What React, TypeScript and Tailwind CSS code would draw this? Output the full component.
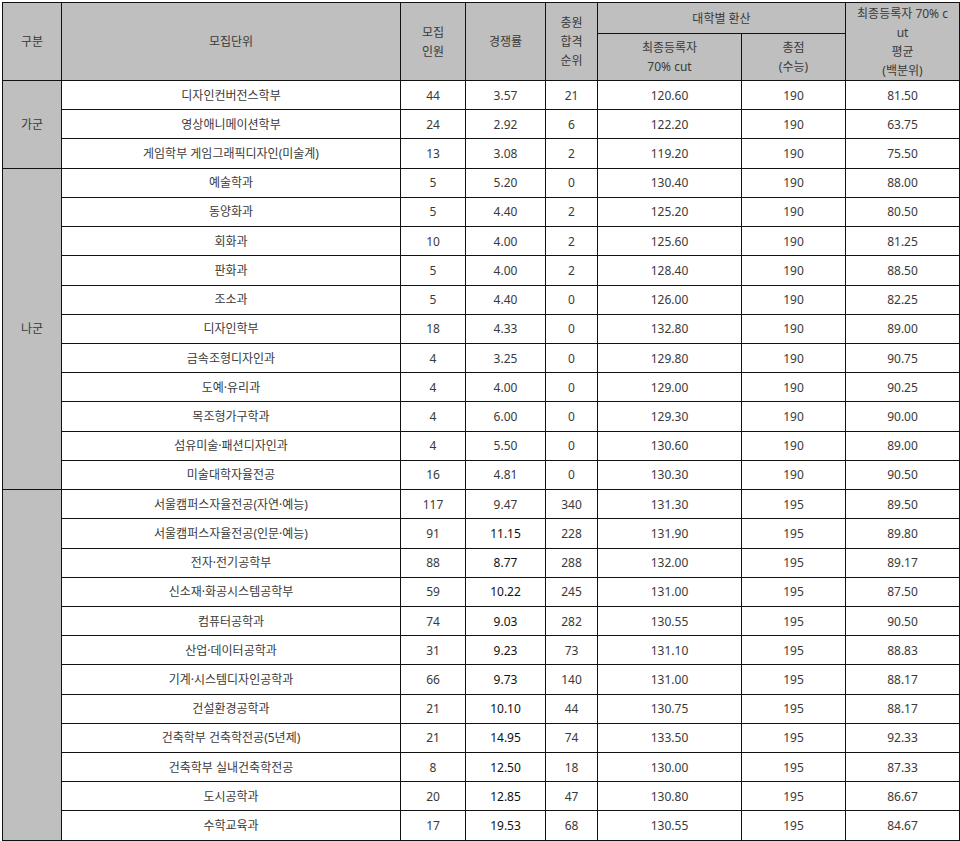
type Row = {
  name: string;
  quota: string;
  rate: string;
  rank: string;
  cut: string;
  total: string;
  avg: string;
  strong?: boolean;
};

const GA: Row[] = [
  { name: "디자인컨버전스학부", quota: "44", rate: "3.57", rank: "21", cut: "120.60", total: "190", avg: "81.50" },
  { name: "영상애니메이션학부", quota: "24", rate: "2.92", rank: "6", cut: "122.20", total: "190", avg: "63.75" },
  { name: "게임학부 게임그래픽디자인(미술계)", quota: "13", rate: "3.08", rank: "2", cut: "119.20", total: "190", avg: "75.50" },
];

const NA: Row[] = [
  { name: "예술학과", quota: "5", rate: "5.20", rank: "0", cut: "130.40", total: "190", avg: "88.00" },
  { name: "동양화과", quota: "5", rate: "4.40", rank: "2", cut: "125.20", total: "190", avg: "80.50" },
  { name: "회화과", quota: "10", rate: "4.00", rank: "2", cut: "125.60", total: "190", avg: "81.25" },
  { name: "판화과", quota: "5", rate: "4.00", rank: "2", cut: "128.40", total: "190", avg: "88.50" },
  { name: "조소과", quota: "5", rate: "4.40", rank: "0", cut: "126.00", total: "190", avg: "82.25" },
  { name: "디자인학부", quota: "18", rate: "4.33", rank: "0", cut: "132.80", total: "190", avg: "89.00" },
  { name: "금속조형디자인과", quota: "4", rate: "3.25", rank: "0", cut: "129.80", total: "190", avg: "90.75" },
  { name: "도예·유리과", quota: "4", rate: "4.00", rank: "0", cut: "129.00", total: "190", avg: "90.25" },
  { name: "목조형가구학과", quota: "4", rate: "6.00", rank: "0", cut: "129.30", total: "190", avg: "90.00" },
  { name: "섬유미술·패션디자인과", quota: "4", rate: "5.50", rank: "0", cut: "130.60", total: "190", avg: "89.00" },
  { name: "미술대학자율전공", quota: "16", rate: "4.81", rank: "0", cut: "130.30", total: "190", avg: "90.50" },
];

const DA: Row[] = [
  { name: "서울캠퍼스자율전공(자연·예능)", quota: "117", rate: "9.47", rank: "340", cut: "131.30", total: "195", avg: "89.50" },
  { name: "서울캠퍼스자율전공(인문·예능)", quota: "91", rate: "11.15", rank: "228", cut: "131.90", total: "195", avg: "89.80", strong: true },
  { name: "전자·전기공학부", quota: "88", rate: "8.77", rank: "288", cut: "132.00", total: "195", avg: "89.17", strong: true },
  { name: "신소재·화공시스템공학부", quota: "59", rate: "10.22", rank: "245", cut: "131.00", total: "195", avg: "87.50", strong: true },
  { name: "컴퓨터공학과", quota: "74", rate: "9.03", rank: "282", cut: "130.55", total: "195", avg: "90.50", strong: true },
  { name: "산업·데이터공학과", quota: "31", rate: "9.23", rank: "73", cut: "131.10", total: "195", avg: "88.83", strong: true },
  { name: "기계·시스템디자인공학과", quota: "66", rate: "9.73", rank: "140", cut: "131.00", total: "195", avg: "88.17", strong: true },
  { name: "건설환경공학과", quota: "21", rate: "10.10", rank: "44", cut: "130.75", total: "195", avg: "88.17", strong: true },
  { name: "건축학부 건축학전공(5년제)", quota: "21", rate: "14.95", rank: "74", cut: "133.50", total: "195", avg: "92.33", strong: true },
  { name: "건축학부 실내건축학전공", quota: "8", rate: "12.50", rank: "18", cut: "130.00", total: "195", avg: "87.33", strong: true },
  { name: "도시공학과", quota: "20", rate: "12.85", rank: "47", cut: "130.80", total: "195", avg: "86.67", strong: true },
  { name: "수학교육과", quota: "17", rate: "19.53", rank: "68", cut: "130.55", total: "195", avg: "84.67", strong: true },
];

const GROUPS: { label: string; rows: Row[] }[] = [
  { label: "가군", rows: GA },
  { label: "나군", rows: NA },
  { label: "", rows: DA },
];

const th = "border border-[#111] bg-[#bfbfbf] px-1 text-center align-middle font-normal";
const td = "border border-[#111] px-1 text-center align-middle";

export default function App() {
  return (
    <div
      className="bg-white p-[2px] text-[12px] leading-[19px] text-[#3a3a3a]"
      style={{ fontFamily: '"Noto Sans", "Noto Sans CJK KR", sans-serif' }}
    >
      <table className="w-[957px] table-fixed border-collapse">
        <colgroup>
          <col className="w-[59px]" />
          <col className="w-[339px]" />
          <col className="w-[65px]" />
          <col className="w-[80px]" />
          <col className="w-[52px]" />
          <col className="w-[144px]" />
          <col className="w-[104px]" />
          <col className="w-[114px]" />
        </colgroup>
        <thead>
          <tr className="h-[31px]">
            <th rowSpan={2} className={th}>구분</th>
            <th rowSpan={2} className={th}>모집단위</th>
            <th rowSpan={2} className={th}>
              모집
              <br />
              인원
            </th>
            <th rowSpan={2} className={th}>경쟁률</th>
            <th rowSpan={2} className={th}>
              충원
              <br />
              합격
              <br />
              순위
            </th>
            <th colSpan={2} className={th}>대학별 환산</th>
            <th rowSpan={2} className={`${th} break-all px-[9px]`}>
              최종등록자 70% cut
              <br />
              평균
              <br />
              (백분위)
            </th>
          </tr>
          <tr className="h-[47px]">
            <th className={th}>
              최종등록자
              <br />
              70% cut
            </th>
            <th className={th}>
              총점
              <br />
              (수능)
            </th>
          </tr>
        </thead>
        <tbody>
          {GROUPS.map((g) =>
            g.rows.map((r, i) => (
              <tr key={`${g.label}-${r.name}`} className="h-[29.23px]">
                {i === 0 ? (
                  <td rowSpan={g.rows.length} className={`${td} bg-[#bfbfbf]`}>
                    {g.label}
                  </td>
                ) : null}
                <td className={td}>{r.name}</td>
                <td className={td}>{r.quota}</td>
                <td className={`${td} ${r.strong ? "text-[#111]" : ""}`}>{r.rate}</td>
                <td className={td}>{r.rank}</td>
                <td className={td}>{r.cut}</td>
                <td className={td}>{r.total}</td>
                <td className={td}>{r.avg}</td>
              </tr>
            )),
          )}
        </tbody>
      </table>
    </div>
  );
}
